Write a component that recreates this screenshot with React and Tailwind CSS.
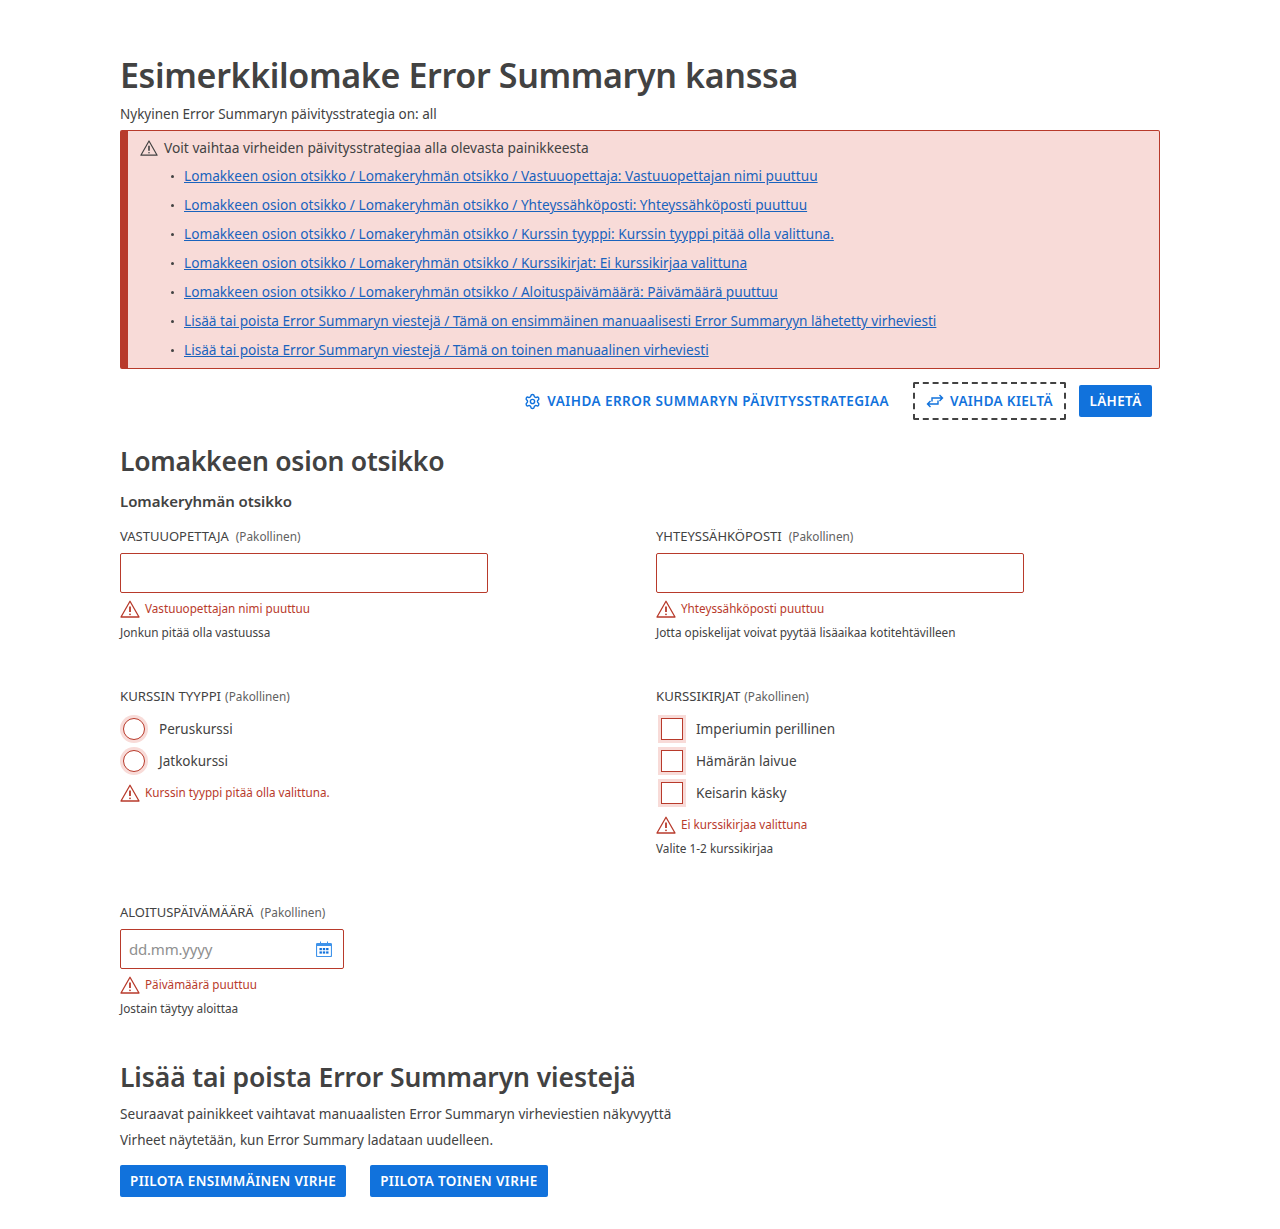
import { Settings } from 'lucide-react';

const font = "font-['Noto_Sans','Open_Sans',sans-serif]";

const WarnIcon = ({ className }) => (
  <svg viewBox="0 0 20 20" fill="none" stroke="currentColor" strokeWidth="1.3" strokeLinejoin="round" className={className}>
    <path d="M10 2.2 L19 18 H1 Z" />
    <path d="M10 7.5 V13" strokeWidth="1.8" />
    <circle cx="10" cy="15.3" r="0.9" fill="currentColor" stroke="none" />
  </svg>
);

const SwapIcon = () => (
  <svg viewBox="0 0 18 18" fill="none" stroke="currentColor" strokeWidth="1.4" className="w-[18px] h-[18px] mr-[6px]">
    <path d="M6 9.5 V6 H16.5 M13.5 3 L16.5 6 L13.5 9" />
    <path d="M12 8.5 V12 H1.5 M4.5 9 L1.5 12 L4.5 15" />
  </svg>
);

const CalendarIcon = () => (
  <svg viewBox="0 0 16 16" className="w-4 h-4 text-[#3f93ea]" fill="none" stroke="currentColor">
    <rect x="0.5" y="2.5" width="15" height="13" rx="1" strokeWidth="1.2" />
    <path d="M1 4 H15" strokeWidth="2" />
    <path d="M4.5 0.5 V3 M11.5 0.5 V3" />
    <g fill="#1172dc" stroke="none">
      <rect x="3.5" y="7" width="2.4" height="2.2" />
      <rect x="6.8" y="7" width="2.4" height="2.2" />
      <rect x="10.1" y="7" width="2.4" height="2.2" />
      <rect x="3.5" y="10.4" width="2.4" height="2.2" />
      <rect x="6.8" y="10.4" width="2.4" height="2.2" />
      <rect x="10.1" y="10.4" width="2.4" height="2.2" />
    </g>
  </svg>
);

const errorLinks = [
  'Lomakkeen osion otsikko / Lomakeryhmän otsikko / Vastuuopettaja: Vastuuopettajan nimi puuttuu',
  'Lomakkeen osion otsikko / Lomakeryhmän otsikko / Yhteyssähköposti: Yhteyssähköposti puuttuu',
  'Lomakkeen osion otsikko / Lomakeryhmän otsikko / Kurssin tyyppi: Kurssin tyyppi pitää olla valittuna.',
  'Lomakkeen osion otsikko / Lomakeryhmän otsikko / Kurssikirjat: Ei kurssikirjaa valittuna',
  'Lomakkeen osion otsikko / Lomakeryhmän otsikko / Aloituspäivämäärä: Päivämäärä puuttuu',
  'Lisää tai poista Error Summaryn viestejä / Tämä on ensimmäinen manuaalisesti Error Summaryyn lähetetty virheviesti',
  'Lisää tai poista Error Summaryn viestejä / Tämä on toinen manuaalinen virheviesti',
];

const Err = ({ children }) => (
  <div className="flex items-center h-6 text-[11.7px] text-[#b83a2b]">
    <WarnIcon className="w-5 h-5 mr-[5px] shrink-0" />
    <span>{children}</span>
  </div>
);

const Hint = ({ children }) => <div className="h-6 flex items-center text-[11.8px] text-[#424242]">{children}</div>;

const Label = ({ text, gap = 'ml-[7px]', size = 'text-[13px]' }) => (
  <div className="h-[21px] flex items-center text-[#424242]">
    <span className={size}>{text}</span>
    <span className={`${gap} text-[11.8px] text-[#616161]`}>(Pakollinen)</span>
  </div>
);

const TextField = ({ label, error, hint }) => (
  <div>
    <Label text={label} />
    <input className="block mt-[6px] w-[368px] h-10 border border-[#b83a2b] rounded-[2px] bg-white" />
    <div className="mt-1"><Err>{error}</Err></div>
    <Hint>{hint}</Hint>
  </div>
);

const Radio = ({ label }) => (
  <div className="flex items-center h-8 text-[13.5px] text-[#424242]">
    <span className="w-7 h-7 rounded-full bg-[#f8dbd8] flex items-center justify-center">
      <span className="w-[22px] h-[22px] rounded-full bg-white border border-[#b83a2b]" />
    </span>
    <span className="ml-[11px]">{label}</span>
  </div>
);

const Check = ({ label }) => (
  <div className="flex items-center h-8 text-[13.6px] text-[#424242]">
    <span className="ml-[2px] w-7 h-7 bg-[#f8dbd8] flex items-center justify-center">
      <span className="w-[22px] h-[22px] bg-white border border-[#b83a2b]" />
    </span>
    <span className="ml-[10px]">{label}</span>
  </div>
);

const Btn = ({ children }) => (
  <button className="h-8 min-w-[73px] px-[10px] bg-[#1172dc] rounded-[2px] text-white text-[13.5px] font-semibold tracking-[0.36px]">{children}</button>
);

export default function App() {
  return (
    <div className={`${font} bg-white min-h-[1229px] px-[120px] pt-[52px] text-[#424242]`}>
      <h1 className="text-[34px] leading-[46px] font-semibold tracking-[-0.35px]">Esimerkkilomake Error Summaryn kanssa</h1>
      <p className="mt-[4px] text-[13.5px] leading-6">Nykyinen Error Summaryn päivitysstrategia on: all</p>

      <div className="mt-[4px] h-[239px] bg-[#f8dbd8] border border-[#b83a2b] border-l-8 rounded-[2px] pl-3">
        <div className="flex items-center h-[31px] pt-[3px] text-[13.75px]">
          <WarnIcon className="w-[18px] h-[18px] mr-[6px]" />
          <span>Voit vaihtaa virheiden päivitysstrategiaa alla olevasta painikkeesta</span>
        </div>
        <ul className="pl-[44px]">
          {errorLinks.map((t) => (
            <li key={t} className="relative h-[29px] flex items-center text-[13.65px] text-[#1a63bd] underline">
              <span className="absolute -left-[13px] top-[13px] w-[3px] h-[3px] rounded-full bg-[#424242]" />
              {t}
            </li>
          ))}
        </ul>
      </div>

      <div className="mt-[13px] h-[38px] flex items-center justify-end pr-2 text-[13.5px] font-semibold text-[#1172dc]">
        <Settings className="w-[17px] h-[17px] mr-[6px]" strokeWidth={2} />
        <span className="tracking-[0.46px]">VAIHDA ERROR SUMMARYN PÄIVITYSSTRATEGIAA</span>
        <span className="ml-6 h-[38px] px-[11px] flex items-center border-2 border-dashed border-[#424242] rounded-[2px] tracking-[0.33px]">
          <SwapIcon />
          VAIHDA KIELTÄ
        </span>
        <span className="ml-[13px]"><Btn>LÄHETÄ</Btn></span>
      </div>

      <h2 className="mt-[21px] text-[26.5px] leading-[40px] font-semibold tracking-[-0.25px]">Lomakkeen osion otsikko</h2>
      <h3 className="mt-[8px] text-[15px] leading-6 font-semibold tracking-[-0.05px]">Lomakeryhmän otsikko</h3>

      <div className="mt-[13px] grid grid-cols-[536px_1fr]">
        <TextField label="VASTUUOPETTAJA" error="Vastuuopettajan nimi puuttuu" hint="Jonkun pitää olla vastuussa" />
        <TextField label="YHTEYSSÄHKÖPOSTI" error="Yhteyssähköposti puuttuu" hint="Jotta opiskelijat voivat pyytää lisäaikaa kotitehtävilleen" />

        <div className="mt-[41px]">
          <Label text="KURSSIN TYYPPI" gap="ml-1" size="text-[13.2px]" />
          <div className="mt-[6px]">
            <Radio label="Peruskurssi" />
            <Radio label="Jatkokurssi" />
          </div>
          <div className="mt-1"><Err>Kurssin tyyppi pitää olla valittuna.</Err></div>
        </div>
        <div className="mt-[41px]">
          <Label text="KURSSIKIRJAT" gap="ml-1" size="text-[13.2px]" />
          <div className="mt-[6px]">
            <Check label="Imperiumin perillinen" />
            <Check label="Hämärän laivue" />
            <Check label="Keisarin käsky" />
          </div>
          <div className="mt-1"><Err>Ei kurssikirjaa valittuna</Err></div>
          <Hint>Valite 1-2 kurssikirjaa</Hint>
        </div>

        <div className="mt-[41px] col-span-2">
          <Label text="ALOITUSPÄIVÄMÄÄRÄ" />
          <div className="mt-[6px] w-[224px] h-10 border border-[#b83a2b] rounded-[2px] flex items-center justify-between pl-2 pr-[11px]">
            <span className="text-[15px] tracking-[-0.2px] text-[#8f8f8f]">dd.mm.yyyy</span>
            <CalendarIcon />
          </div>
          <div className="mt-1"><Err>Päivämäärä puuttuu</Err></div>
          <Hint>Jostain täytyy aloittaa</Hint>
        </div>
      </div>

      <h2 className="mt-[36px] text-[26.5px] leading-[40px] font-semibold tracking-[-0.1px]">Lisää tai poista Error Summaryn viestejä</h2>
      <p className="mt-[5px] text-[13.6px] leading-6">Seuraavat painikkeet vaihtavat manuaalisten Error Summaryn virheviestien näkyvyyttä</p>
      <p className="mt-[2px] text-[13.5px] leading-6">Virheet näytetään, kun Error Summary ladataan uudelleen.</p>
      <div className="mt-[13px] flex gap-6">
        <Btn>PIILOTA ENSIMMÄINEN VIRHE</Btn>
        <Btn>PIILOTA TOINEN VIRHE</Btn>
      </div>
    </div>
  );
}
